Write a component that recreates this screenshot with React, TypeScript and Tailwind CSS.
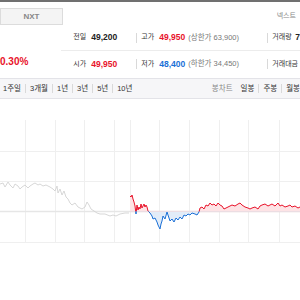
import React from "react";

const KR = { fontFamily: '"Liberation Sans", "Noto Sans CJK KR", sans-serif' };

const gray: [number, number][] = [
  [0, 183], [3, 182], [5, 186], [8, 181], [10, 184], [13, 187], [15, 183], [18, 185], [20, 188], [22, 186],
  [25, 184], [28, 187], [30, 185], [33, 183], [35, 182], [38, 184], [40, 183], [43, 185], [46, 184], [50, 186],
  [53, 188], [55, 190], [57, 185], [58, 192], [60, 188], [62, 194], [64, 190], [66, 196], [68, 198], [70, 202],
  [72, 204], [75, 202], [78, 206], [82, 208], [85, 206], [87, 201], [89, 204], [91, 208], [94, 210], [97, 212],
  [100, 213], [105, 213], [110, 215], [113, 214], [116, 215], [120, 213], [125, 212], [129, 212],
];

const today: [number, number][] = [
  [130, 195], [131, 196], [132, 194], [133, 198], [134, 201], [135, 205], [136, 213], [137, 204], [138, 209],
  [139, 206], [140, 208], [141, 203], [142, 207], [143, 205], [144, 203], [145, 206], [146, 204], [147, 206],
  [148, 210], [150, 212], [152, 215], [153, 218], [155, 217], [157, 221], [158, 224], [160, 228], [161, 223],
  [162, 220], [163, 215], [165, 218], [167, 211], [168, 214], [170, 220], [172, 218], [174, 221], [176, 217],
  [178, 219], [180, 216], [182, 218], [184, 214], [186, 215], [188, 213], [190, 214], [192, 212], [195, 213],
  [197, 214], [199, 211], [200, 207], [202, 206], [204, 208], [206, 204], [208, 205], [210, 202], [212, 204],
  [214, 203], [216, 205], [218, 202], [220, 204], [222, 205], [224, 208], [226, 207], [228, 206], [230, 205],
  [232, 204], [235, 205], [238, 203], [240, 202], [242, 204], [245, 206], [248, 207], [250, 208], [252, 207],
  [255, 206], [258, 208], [260, 205], [262, 204], [265, 203], [268, 205], [270, 204], [272, 203], [275, 205],
  [278, 202], [280, 205], [282, 204], [285, 206], [288, 205], [290, 204], [292, 206], [295, 205], [298, 207],
  [300, 206],
];

const BASE = 210.5;
const pts = (a: [number, number][]) => a.map((p) => p.join(",")).join(" ");
const area = `130,${BASE} ${pts(today)} 300,${BASE}`;

const Divider = () => <span className="mx-[4px] inline-block h-[9px] w-px bg-[#d9d9d9]" />;

const Chart = () => (
  <svg width="300" height="202" viewBox="0 98 300 202" className="block">
    <defs>
      <clipPath id="up">
        <rect x="0" y="98" width="300" height={BASE - 98} />
      </clipPath>
      <clipPath id="down">
        <rect x="0" y={BASE} width="300" height="100" />
      </clipPath>
    </defs>
    {[25, 55, 84, 114, 130, 159, 189, 219, 248, 279].map((x) => (
      <line key={x} x1={x + 0.5} y1="119" x2={x + 0.5} y2="242" stroke="#efefef" />
    ))}
    {[150, 180, 241].map((y) => (
      <line key={y} x1="0" y1={y + 0.5} x2="300" y2={y + 0.5} stroke="#efefef" />
    ))}
    <line x1="0" y1={BASE} x2="130" y2={BASE} stroke="#e6e6e6" strokeWidth="1.5" />
    <line x1="130" y1={BASE} x2="300" y2={BASE} stroke="#e9d6d8" strokeWidth="1.5" />
    <polygon points={area} fill="#fde3e5" clipPath="url(#up)" />
    <polygon points={area} fill="#e2ecf8" clipPath="url(#down)" />
    <polyline points={pts(gray)} fill="none" stroke="#d2d2d2" strokeWidth="0.9" />
    <polyline points={pts(today)} fill="none" stroke="#e8132a" strokeWidth="1" clipPath="url(#up)" />
    <polyline points={pts(today)} fill="none" stroke="#1a6fd6" strokeWidth="1" clipPath="url(#down)" />
  </svg>
);

export default function App() {
  return (
    <div className="w-[300px] h-[300px] overflow-hidden bg-white text-[#222]" style={KR}>
      <div className="h-[2px] bg-[#707070]" />
      <div className="flex h-[23px] items-start justify-between">
        <div className="mt-[6px] flex h-[17px] w-[63px] items-center justify-center border border-[#dcdcdc] bg-[#f4f4f4] text-[8px] font-bold text-[#888]">
          NXT
        </div>
        <span className="mr-[4px] mt-[9px] text-[7px] text-[#888]">넥스트</span>
      </div>

      <div className="flex h-[53px]">
        <div className="relative w-[63px]">
          <span className="absolute left-0 top-[29px] text-[10px] font-semibold text-[#e8132a]">0.30%</span>
        </div>
        <div className="flex flex-1 flex-col">
          <div className="flex h-[26px] items-center border-b border-[#ececec] text-[8.5px] whitespace-nowrap">
            <div className="flex w-[75px] items-center pl-[12px]">
              <span className="w-[18px] text-[7px] text-[#333]">전일</span>
              <span className="font-bold">49,200</span>
            </div>
            <span className="h-[10px] w-px bg-[#d9d9d9]" />
            <div className="flex w-[130px] items-center pl-[4px]">
              <span className="w-[18px] text-[7px] text-[#333]">고가</span>
              <span className="font-bold text-[#e8132a]">49,950</span>
              <span className="ml-[3px] text-[7.5px] text-[#777]">(상한가 63,900)</span>
            </div>
            <span className="h-[10px] w-px bg-[#d9d9d9]" />
            <div className="flex items-center pl-[4px]">
              <span className="w-[23px] text-[7px] text-[#333]">거래량</span>
              <span className="font-bold">7</span>
            </div>
          </div>
          <div className="flex h-[26px] items-center text-[8.5px] whitespace-nowrap">
            <div className="flex w-[75px] items-center pl-[12px]">
              <span className="w-[18px] text-[7px] text-[#333]">시가</span>
              <span className="font-bold text-[#e8132a]">49,950</span>
            </div>
            <span className="h-[10px] w-px bg-[#d9d9d9]" />
            <div className="flex w-[130px] items-center pl-[4px]">
              <span className="w-[18px] text-[7px] text-[#333]">저가</span>
              <span className="font-bold text-[#1a6fd6]">48,400</span>
              <span className="ml-[3px] text-[7.5px] text-[#777]">(하한가 34,450)</span>
            </div>
            <span className="h-[10px] w-px bg-[#d9d9d9]" />
            <div className="flex items-center pl-[4px]">
              <span className="text-[7px] text-[#333]">거래대금</span>
            </div>
          </div>
        </div>
      </div>

      <div className="flex h-[21px] items-center justify-between border-y border-[#e3e3e8] bg-[#f6f6f8] text-[7.5px] text-[#333] whitespace-nowrap">
        <div className="flex items-center pl-[3px]">
          <span>1주일</span>
          <Divider />
          <span>3개월</span>
          <Divider />
          <span>1년</span>
          <Divider />
          <span>3년</span>
          <Divider />
          <span>5년</span>
          <Divider />
          <span>10년</span>
        </div>
        <div className="flex items-center">
          <span className="mr-[8px] text-[#888]">봉차트</span>
          <span>일봉</span>
          <Divider />
          <span>주봉</span>
          <Divider />
          <span>월봉</span>
        </div>
      </div>

      <Chart />
    </div>
  );
}
